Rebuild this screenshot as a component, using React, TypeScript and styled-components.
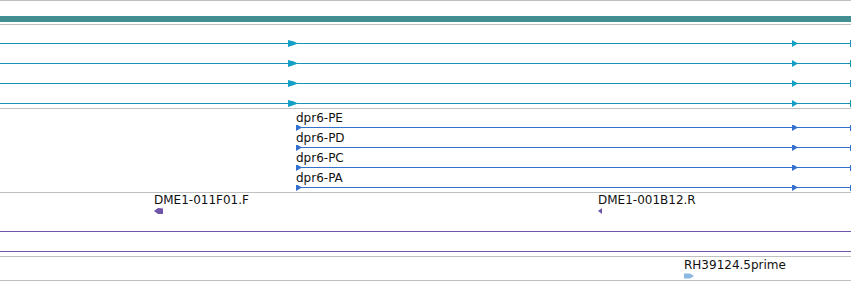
import React from "react";
import styled, { createGlobalStyle } from "styled-components";

const GlobalStyle = createGlobalStyle`
  html, body {
    margin: 0;
    padding: 0;
    background: #ffffff;
  }
  body {
    font-family: "DejaVu Sans", "Liberation Sans", sans-serif;
    color: #111111;
  }
`;

const WIDTH = 851;

const Browser = styled.div`
  width: ${WIDTH}px;
  height: 281px;
  display: flex;
  flex-direction: column;
  border-top: 1px solid #c0c0c0;
  overflow: hidden;
`;

const Track = styled.div<{ height: number; padTop?: number }>`
  position: relative;
  height: ${({ height }) => height}px;
  padding-top: ${({ padTop = 0 }) => padTop}px;
  box-sizing: border-box;
  border-bottom: 1px solid #c0c0c0;
  display: flex;
  flex-direction: column;
  flex-shrink: 0;
`;

const SequenceBar = styled.div`
  width: 100%;
  height: 6px;
  background: #418f91;
`;

const Glyph = styled.svg`
  display: block;
  flex-shrink: 0;
`;

const TranscriptRow = styled.div`
  display: flex;
  flex-direction: column;
  height: 20px;
`;

const Label = styled.div<{ left: number }>`
  height: 14px;
  line-height: 14px;
  font-size: 12px;
  padding-left: ${({ left }) => left}px;
  white-space: nowrap;
`;

const FeatureRow = styled.div<{ height: number }>`
  position: relative;
  height: ${({ height }) => height}px;
  flex-shrink: 0;
`;

const Feature = styled.div`
  position: absolute;
  display: flex;
  flex-direction: column;
  gap: 1px;
`;

const FeatureLabel = styled.div`
  font-size: 12px;
  line-height: 14px;
  white-space: nowrap;
`;

type LineProps = {
  color: string;
  arrowColor: string;
  start: number;
  y: number;
  height: number;
};

// one transcript line: start arrow, mid arrow at 792, end tick
const TranscriptLine = ({ color, arrowColor, start, y, height }: LineProps) => (
  <Glyph width={WIDTH} height={height}>
    <line x1={start} x2={850} y1={y + 0.5} y2={y + 0.5} stroke={color} strokeWidth={1} />
    <polygon points={`${start},${y - 3} ${start + 6},${y + 0.5} ${start},${y + 4}`} fill={arrowColor} />
    <polygon points={`792,${y - 3} 798,${y + 0.5} 792,${y + 4}`} fill={arrowColor} />
    <line x1={850.5} x2={850.5} y1={y - 3} y2={y + 4} stroke={color} strokeWidth={1} />
  </Glyph>
);

// gene model row that runs in from the left edge
const GeneLine = ({ color, arrowColor, y }: { color: string; arrowColor: string; y: number }) => (
  <Glyph width={WIDTH} height={20}>
    <line x1={0} x2={850} y1={y + 0.5} y2={y + 0.5} stroke={color} strokeWidth={1} />
    <polygon
      points={`288,${y - 3} 294,${y - 1.5} 298,${y + 0.5} 294,${y + 2} 288,${y + 4}`}
      fill={arrowColor}
    />
    <polygon points={`792,${y - 3} 798,${y + 0.5} 792,${y + 4}`} fill={arrowColor} />
    <line x1={850.5} x2={850.5} y1={y - 3} y2={y + 4} stroke={color} strokeWidth={1} />
  </Glyph>
);

const FlatLine = ({ color, y }: { color: string; y: number }) => (
  <Glyph width={WIDTH} height={20}>
    <line x1={0} x2={WIDTH} y1={y + 0.5} y2={y + 0.5} stroke={color} strokeWidth={1} />
  </Glyph>
);

const LeftArrow = ({ color, width }: { color: string; width: number }) => (
  <Glyph width={width} height={6}>
    <polygon points={`0,3 4,0 ${width},0.5 ${width},6 4,6`} fill={color} />
  </Glyph>
);

const RightArrow = ({ color, width }: { color: string; width: number }) => (
  <Glyph width={width} height={6}>
    <polygon points={`0,0.5 ${width - 4},0.5 ${width},3 ${width - 4},5.5 0,5.5`} fill={color} />
  </Glyph>
);

const transcripts = ["dpr6-PE", "dpr6-PD", "dpr6-PC", "dpr6-PA"];

const ests = [
  { name: "DME1-011F01.F", x: 154, arrowW: 9 },
  { name: "DME1-001B12.R", x: 598, arrowW: 4 },
];

const App = () => (
  <>
    <GlobalStyle />
    <Browser>
      <Track height={24} padTop={15}>
        <SequenceBar />
      </Track>

      <Track height={84} padTop={9}>
        {transcripts.map((t) => (
          <GeneLine key={t} color="#1594b4" arrowColor="#14a0c6" y={9} />
        ))}
      </Track>

      <Track height={84} padTop={2}>
        {transcripts.map((t) => (
          <TranscriptRow key={t}>
            <Label left={296}>{t}</Label>
            <TranscriptLine color="#3470cf" arrowColor="#3470cf" start={296} y={2} height={6} />
          </TranscriptRow>
        ))}
      </Track>

      <Track height={64}>
        <FeatureRow height={22}>
          {ests.map((e) => (
            <Feature key={e.name} style={{ left: e.x, top: 0 }}>
              <FeatureLabel>{e.name}</FeatureLabel>
              <LeftArrow color="#6e55a8" width={e.arrowW} />
            </Feature>
          ))}
        </FeatureRow>
        <FlatLine color="#6e55a8" y={16} />
        <FlatLine color="#6e55a8" y={16} />
      </Track>

      <Track height={24}>
        <FeatureRow height={23}>
          <Feature style={{ left: 684, top: 1 }}>
            <FeatureLabel>RH39124.5prime</FeatureLabel>
            <RightArrow color="#8ab8e0" width={10} />
          </Feature>
        </FeatureRow>
      </Track>
    </Browser>
  </>
);

export default App;
